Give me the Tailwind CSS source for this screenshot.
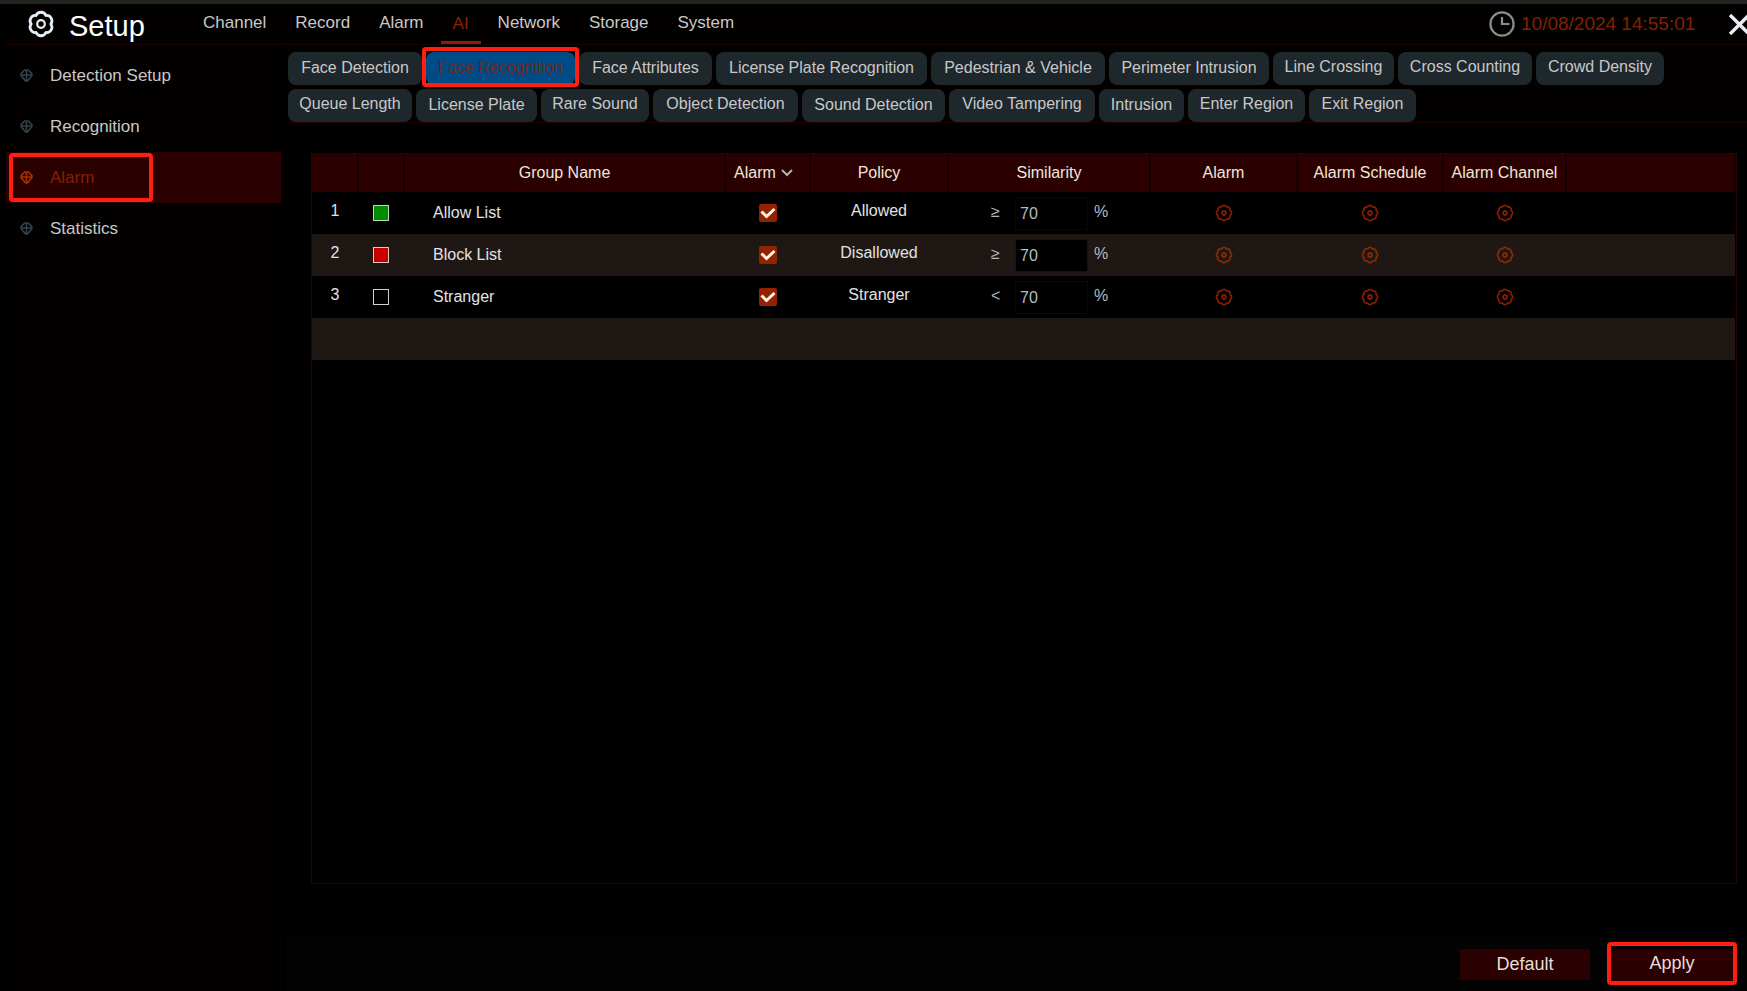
<!DOCTYPE html>
<html lang="en">
<head>
<meta charset="utf-8">
<title>Setup - AI Alarm</title>
<script src="https://cdn.jsdelivr.net/npm/@tailwindcss/browser@4"></script>
</head>
<body class="bg-black font-['Liberation_Sans',Arial,sans-serif] text-base text-[#c8c8c8] overflow-x-hidden">
<svg class="hidden" aria-hidden="true">
  <symbol id="gear" viewBox="-9 -9 18 18">
    <path d="M6.1-2.53A2.9 2.9 0 0 1 6.1 2.53A2.9 2.9 0 0 1 2.53 6.1A2.9 2.9 0 0 1-2.53 6.1A2.9 2.9 0 0 1-6.1 2.53A2.9 2.9 0 0 1-6.1-2.53A2.9 2.9 0 0 1-2.53-6.1A2.9 2.9 0 0 1 2.53-6.1A2.9 2.9 0 0 1 6.1-2.53Z" fill="none" stroke="currentColor" stroke-width="1.7" stroke-linejoin="round"/>
    <circle r="2" fill="none" stroke="currentColor" stroke-width="1.8"/>
  </symbol>
  <symbol id="gem" viewBox="0 0 14 16">
    <path d="M5 2h4L12.8 6v2L8 14H6L1.200 8V6zM7 2v12M1.200 7.500h11.600" fill="none" stroke="currentColor" stroke-width="1.7" stroke-linejoin="round"/>
  </symbol>
</svg>

<div class="flex min-h-screen flex-col border-t-4 border-[#1f2421]">
  <header class="ml-1.5 flex h-[41px] items-center border-b border-[#1f0000] bg-[#030000]">
    <div class="flex w-[185px] items-center gap-3.5 pl-[21px]">
      <svg class="size-7 shrink-0 text-[#e6edf5]" viewBox="-14 -14 28 28" aria-hidden="true">
        <path d="M9.8 0A5.3 5.3 0 0 1 4.9 8.49A5.3 5.3 0 0 1-4.9 8.49A5.3 5.3 0 0 1-9.8 0A5.3 5.3 0 0 1-4.9-8.49A5.3 5.3 0 0 1 4.9-8.49A5.3 5.3 0 0 1 9.8 0Z" fill="none" stroke="currentColor" stroke-width="2.8" stroke-linejoin="round"/>
        <circle r="3.8" fill="none" stroke="currentColor" stroke-width="2.2"/>
      </svg>
      <h1 class="pt-1 text-[29px] leading-8 text-white">Setup</h1>
    </div>
    <nav class="flex h-full items-stretch gap-[5px] text-[17px]">
      <button class="px-3 pb-0.5">Channel</button>
      <button class="px-3 pb-0.5">Record</button>
      <button class="px-3 pb-0.5">Alarm</button>
      <button class="border-b-3 border-[#8a2200] px-3 pt-1 pb-0.5 text-[#8a2200]">AI</button>
      <button class="px-3 pb-0.5">Network</button>
      <button class="px-3 pb-0.5">Storage</button>
      <button class="px-3 pb-0.5">System</button>
    </nav>
    <div class="-mr-1 ml-auto flex items-center">
      <svg class="size-[26px]" viewBox="0 0 26 26" fill="none" stroke="#8c8c8c" stroke-width="2.2" aria-hidden="true"><circle cx="13" cy="13" r="11.6"/><path d="M13 6v7h7.5"/></svg>
      <time class="ml-1.5 w-[207px] text-[19px] text-[#822000]">10/08/2024 14:55:01</time>
      <button aria-label="Close"><svg class="size-[23px]" viewBox="0 0 23 23" fill="none" stroke="#e6edf5" stroke-width="3.4" aria-hidden="true"><path d="M2 2l19 19M21 2L2 21"/></svg></button>
    </div>
  </header>

  <div class="flex flex-1">
    <aside class="ml-1.5 w-[275px] shrink-0 bg-[#030000] pt-[5px] text-[17px]">
      <nav class="flex flex-col">
        <a href="#" class="flex h-[51px] items-center gap-[17px] pl-3.5"><svg class="h-[15px] w-[13px] text-[#33434a]"><use href="#gem"/></svg>Detection Setup</a>
        <a href="#" class="flex h-[51px] items-center gap-[17px] pl-3.5"><svg class="h-[15px] w-[13px] text-[#33434a]"><use href="#gem"/></svg>Recognition</a>
        <a href="#" class="relative flex h-[51px] items-center gap-[17px] bg-[#2a0000] pl-3.5 text-[#822000]"><svg class="h-[15px] w-[13px] text-[#a83000]"><use href="#gem"/></svg>Alarm<span class="absolute top-px left-[3px] h-[49px] w-36 rounded border-4 border-[#ff1e12]"></span></a>
        <a href="#" class="flex h-[51px] items-center gap-[17px] pl-3.5"><svg class="h-[15px] w-[13px] text-[#33434a]"><use href="#gem"/></svg>Statistics</a>
      </nav>
    </aside>

    <main class="ml-1.5 flex min-w-0 flex-1 flex-col">
      <div class="flex flex-col gap-1 border-b border-[#1f0000] bg-[#030000] pt-[7px] pl-px">
        <div class="flex gap-1 whitespace-nowrap">
          <button class="h-[33px] w-[134px] rounded-lg bg-[#1e272c] pb-0.5">Face Detection</button>
          <button class="relative h-[33px] w-[149px] rounded-lg bg-[#004a86] pb-0.5 text-[#6a2a22]">Face Recognition<span class="absolute -top-[5px] -right-1 -bottom-0.5 -left-1 rounded border-4 border-[#ff1e12]"></span></button>
          <button class="h-[33px] w-[133px] rounded-lg bg-[#1e272c] pb-0.5">Face Attributes</button>
          <button class="h-[33px] w-[211px] rounded-lg bg-[#1e272c] pb-0.5">License Plate Recognition</button>
          <button class="h-[33px] w-[174px] rounded-lg bg-[#1e272c] pb-0.5">Pedestrian &amp; Vehicle</button>
          <button class="h-[33px] w-[160px] rounded-lg bg-[#1e272c] pb-0.5">Perimeter Intrusion</button>
          <button class="h-[33px] w-[121px] rounded-lg bg-[#1e272c] pb-1">Line Crossing</button>
          <button class="h-[33px] w-[134px] rounded-lg bg-[#1e272c] pb-1">Cross Counting</button>
          <button class="h-[33px] w-[128px] rounded-lg bg-[#1e272c] pb-1">Crowd Density</button>
        </div>
        <div class="flex gap-1 whitespace-nowrap">
          <button class="h-[33px] w-[124px] rounded-lg bg-[#1e272c] pb-1">Queue Length</button>
          <button class="h-[33px] w-[121px] rounded-lg bg-[#1e272c] pb-0.5">License Plate</button>
          <button class="h-[33px] w-[108px] rounded-lg bg-[#1e272c] pb-1">Rare Sound</button>
          <button class="h-[33px] w-[145px] rounded-lg bg-[#1e272c] pb-1">Object Detection</button>
          <button class="h-[33px] w-[143px] rounded-lg bg-[#1e272c] pb-0.5">Sound Detection</button>
          <button class="h-[33px] w-[146px] rounded-lg bg-[#1e272c] pb-1">Video Tampering</button>
          <button class="h-[33px] w-[85px] rounded-lg bg-[#1e272c] pb-0.5">Intrusion</button>
          <button class="h-[33px] w-[117px] rounded-lg bg-[#1e272c] pb-1">Enter Region</button>
          <button class="h-[33px] w-[107px] rounded-lg bg-[#1e272c] pb-1">Exit Region</button>
        </div>
      </div>

      <section class="mt-[30px] mr-2.5 mb-[53px] ml-6 flex-1 border border-[#2a0000]">
        <table class="w-full table-fixed border-collapse text-[#e2e2e2]">
          <colgroup><col class="w-[46px]"><col class="w-[46px]"><col class="w-[321px]"><col class="w-[85px]"><col class="w-[138px]"><col class="w-[202px]"><col class="w-[147px]"><col class="w-[146px]"><col class="w-[123px]"><col></colgroup>
          <thead>
            <tr class="h-[38px] bg-[#2a0000] text-[#f0e7da] *:border-r-2 *:border-[#160000] *:p-0 *:font-normal *:whitespace-nowrap">
              <th></th><th></th>
              <th>Group Name</th>
              <th><button class="inline-flex items-center gap-[5px] pr-2">Alarm <svg class="h-2 w-3" viewBox="0 0 12 8" fill="none" stroke="#b8b0a8" stroke-width="2" aria-hidden="true"><path d="M1 1l5 5 5-5"/></svg></button></th>
              <th>Policy</th>
              <th>Similarity</th>
              <th>Alarm</th>
              <th>Alarm Schedule</th>
              <th>Alarm Channel</th>
              <th class="border-r-0"></th>
            </tr>
          </thead>
          <tbody class="text-center">
            <tr class="h-[42px] *:p-0">
              <td class="pb-1!">1</td>
              <td><span class="mx-auto block size-4 border border-[#b8d8b8] bg-[#008c00]"></span></td>
              <td class="pl-[29px]! text-left">Allow List</td>
              <td><label class="relative mx-auto block size-[18px]"><input type="checkbox" checked aria-label="Alarm for Allow List" class="block size-[18px] appearance-none rounded-xs bg-[#922200]"><svg class="absolute inset-0 size-[18px]" viewBox="0 0 18 18" fill="none" stroke="#fff3e6" stroke-width="3" aria-hidden="true"><path d="M2.5 7.5l5 5 8-7.5"/></svg></label></td>
              <td class="pb-1!">Allowed</td>
              <td><div class="flex items-center pl-[43px] text-[#b4bcc0]"><span class="w-6 pb-0.5 text-left">≥</span><input type="text" value="70" aria-label="Similarity for Allow List" class="h-[33px] w-[73px] border border-[#1c0000] bg-black pt-0.5 pl-1"><span class="ml-1.5 pb-0.5">%</span></div></td>
              <td><button aria-label="Alarm settings" class="block mx-auto text-[#8a1c00]"><svg class="size-[18px]"><use href="#gear"/></svg></button></td>
              <td><button aria-label="Alarm schedule" class="block mx-auto text-[#8a1c00]"><svg class="size-[18px]"><use href="#gear"/></svg></button></td>
              <td><button aria-label="Alarm channel" class="block mx-auto text-[#8a1c00]"><svg class="size-[18px]"><use href="#gear"/></svg></button></td>
              <td></td>
            </tr>
            <tr class="h-[42px] bg-[#1f1714] *:p-0">
              <td class="pb-1!">2</td>
              <td><span class="mx-auto block size-4 border border-[#e0c8c8] bg-[#c80000]"></span></td>
              <td class="pl-[29px]! text-left">Block List</td>
              <td><label class="relative mx-auto block size-[18px]"><input type="checkbox" checked aria-label="Alarm for Block List" class="block size-[18px] appearance-none rounded-xs bg-[#922200]"><svg class="absolute inset-0 size-[18px]" viewBox="0 0 18 18" fill="none" stroke="#fff3e6" stroke-width="3" aria-hidden="true"><path d="M2.5 7.5l5 5 8-7.5"/></svg></label></td>
              <td class="pb-1!">Disallowed</td>
              <td><div class="flex items-center pl-[43px] text-[#b4bcc0]"><span class="w-6 pb-0.5 text-left">≥</span><input type="text" value="70" aria-label="Similarity for Block List" class="h-[33px] w-[73px] border border-[#2e0a00] bg-black pt-0.5 pl-1"><span class="ml-1.5 pb-0.5">%</span></div></td>
              <td><button aria-label="Alarm settings" class="block mx-auto text-[#8a2a00]"><svg class="size-[18px]"><use href="#gear"/></svg></button></td>
              <td><button aria-label="Alarm schedule" class="block mx-auto text-[#8a2a00]"><svg class="size-[18px]"><use href="#gear"/></svg></button></td>
              <td><button aria-label="Alarm channel" class="block mx-auto text-[#8a2a00]"><svg class="size-[18px]"><use href="#gear"/></svg></button></td>
              <td></td>
            </tr>
            <tr class="h-[42px] *:p-0">
              <td class="pb-1!">3</td>
              <td><span class="mx-auto block size-4 border border-[#d0d0d0] bg-black"></span></td>
              <td class="pl-[29px]! text-left">Stranger</td>
              <td><label class="relative mx-auto block size-[18px]"><input type="checkbox" checked aria-label="Alarm for Stranger" class="block size-[18px] appearance-none rounded-xs bg-[#922200]"><svg class="absolute inset-0 size-[18px]" viewBox="0 0 18 18" fill="none" stroke="#fff3e6" stroke-width="3" aria-hidden="true"><path d="M2.5 7.5l5 5 8-7.5"/></svg></label></td>
              <td class="pb-1!">Stranger</td>
              <td><div class="flex items-center pl-[43px] text-[#b4bcc0]"><span class="w-6 pb-0.5 text-left">&lt;</span><input type="text" value="70" aria-label="Similarity for Stranger" class="h-[33px] w-[73px] border border-[#1c0000] bg-black pt-0.5 pl-1"><span class="ml-1.5 pb-0.5">%</span></div></td>
              <td><button aria-label="Alarm settings" class="block mx-auto text-[#8a1c00]"><svg class="size-[18px]"><use href="#gear"/></svg></button></td>
              <td><button aria-label="Alarm schedule" class="block mx-auto text-[#8a1c00]"><svg class="size-[18px]"><use href="#gear"/></svg></button></td>
              <td><button aria-label="Alarm channel" class="block mx-auto text-[#8a1c00]"><svg class="size-[18px]"><use href="#gear"/></svg></button></td>
              <td></td>
            </tr>
            <tr class="h-[42px] bg-[#1f1714]"><td colspan="10"></td></tr>
          </tbody>
        </table>
      </section>

      <footer class="flex h-[54px] items-start justify-end gap-[17px] bg-[#030303] pt-[5px] pr-2.5 text-[18px] text-[#e6ded6]">
        <button class="mt-[7px] h-[31px] w-[130px] bg-[#2a0000]">Default</button>
        <button class="h-[43px] w-[130px] rounded border-4 border-[#ff1e12] pt-[3px]"><span class="flex h-full items-center justify-center bg-[#2a0000] pb-1">Apply</span></button>
      </footer>
    </main>
  </div>
</div>
</body>
</html>
